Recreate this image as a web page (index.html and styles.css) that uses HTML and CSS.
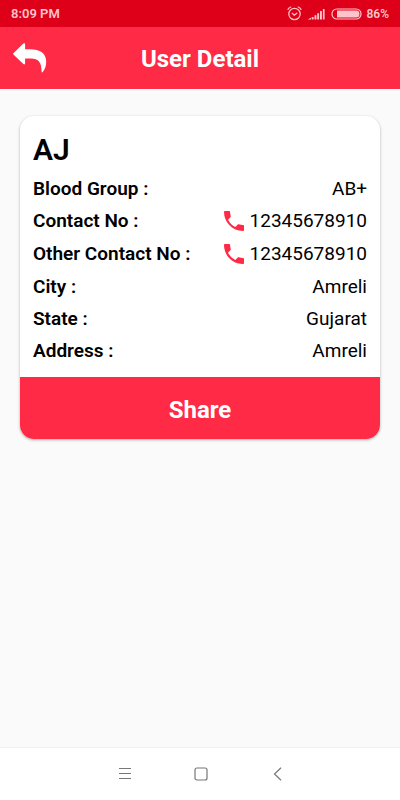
FILE: index.html
```html
<!DOCTYPE html>
<html lang="en">
<head>
    <meta charset="UTF-8">
    <meta name="viewport" content="width=device-width, initial-scale=1">
    <title>User Detail</title>
    <link rel="stylesheet" href="styles.css">
</head>
<body>

<div class="status-bar">
    <span>8:09 PM</span>
    <div class="status-icons">
        <svg class="alarm" width="15" height="15" viewBox="0 0 15 15" fill="none" stroke="currentColor" stroke-width="1.2" stroke-linecap="round">
            <circle cx="7.5" cy="8" r="5.7"/>
            <path d="M1 3.4Q2 1.7 3.8 1M14 3.4Q13 1.7 11.2 1M5.2 7.3L7.3 9.3L9.8 7.2"/>
        </svg>
        <svg class="signal" width="17" height="13" viewBox="0 0 17 13" fill="currentColor">
            <path d="M0 12.3L3 10.8V12.5H0zM3.7 10H5.6V12.5H3.7zM6.5 8.2H8.4V12.5H6.5zM9.2 6.2H11.1V12.5H9.2zM12 4H13.9V12.5H12zM14.9 2H16.6V12.5H14.9z"/>
        </svg>
        <svg class="battery" width="31" height="12" viewBox="0 0 31 12">
            <rect x="1" y="1" width="29" height="10" rx="4.8" fill="none" stroke="currentColor" stroke-width="1.2"/>
            <path d="M6 2.5H26Q28.5 3 28.5 6T26 9.5H6z" fill="currentColor"/>
        </svg>
        <span>86%</span>
    </div>
</div>

<header class="app-bar">
    <button class="back" type="button" aria-label="Back">
        <svg width="34" height="30" viewBox="0 0 34 30" fill="#fff">
            <path d="M0.4 10.2L10.4 0.5Q12 -0.5 12.1 1.3V6.3H17C27 6.3 33.2 10.5 33.2 18.5C33.2 22.5 32.2 26 29.6 29.2H28.6C28.6 19 25.5 15.5 18 15.5H12.1V20.3Q12 22 10.4 21.1L0.4 11.5Q-0.2 10.8 0.4 10.2z"/>
        </svg>
    </button>
    <h1>User Detail</h1>
</header>

<main class="content">
    <section class="card">
        <div class="card-body">
            <h2>AJ</h2>
            <dl class="details">
                <div class="row">
                    <dt>Blood Group :</dt>
                    <dd>AB+</dd>
                </div>
                <div class="row phone-row">
                    <dt>Contact No :</dt>
                    <dd>
                        <a class="phone" href="tel:12345678910">
                            <svg width="20" height="20" viewBox="3 3 18 18" fill="#ff2a45" aria-hidden="true">
                                <path d="M6.62 10.79c1.44 2.83 3.76 5.14 6.59 6.59l2.2-2.2c.27-.27.67-.36 1.02-.24 1.12.37 2.33.57 3.57.57.55 0 1 .45 1 1V20c0 .55-.45 1-1 1-9.39 0-17-7.61-17-17 0-.55.45-1 1-1h3.5c.55 0 1 .45 1 1 0 1.25.2 2.45.57 3.57.11.35.03.74-.25 1.02l-2.2 2.2z"/>
                            </svg>
                            12345678910
                        </a>
                    </dd>
                </div>
                <div class="row phone-row">
                    <dt>Other Contact No :</dt>
                    <dd>
                        <a class="phone" href="tel:12345678910">
                            <svg width="20" height="20" viewBox="3 3 18 18" fill="#ff2a45" aria-hidden="true">
                                <path d="M6.62 10.79c1.44 2.83 3.76 5.14 6.59 6.59l2.2-2.2c.27-.27.67-.36 1.02-.24 1.12.37 2.33.57 3.57.57.55 0 1 .45 1 1V20c0 .55-.45 1-1 1-9.39 0-17-7.61-17-17 0-.55.45-1 1-1h3.5c.55 0 1 .45 1 1 0 1.25.2 2.45.57 3.57.11.35.03.74-.25 1.02l-2.2 2.2z"/>
                            </svg>
                            12345678910
                        </a>
                    </dd>
                </div>
                <div class="row">
                    <dt>City :</dt>
                    <dd>Amreli</dd>
                </div>
                <div class="row">
                    <dt>State :</dt>
                    <dd>Gujarat</dd>
                </div>
                <div class="row">
                    <dt>Address :</dt>
                    <dd>Amreli</dd>
                </div>
            </dl>
        </div>
        <button class="share" type="button">Share</button>
    </section>
</main>

<nav class="nav-bar">
    <button type="button" aria-label="Menu">
        <svg width="14" height="14" viewBox="0 0 14 14" fill="none" stroke="#777">
            <path d="M1 1.5H13M1 6.5H13M1 11.5H13"/>
        </svg>
    </button>
    <button type="button" aria-label="Home">
        <svg width="14" height="14" viewBox="0 0 14 14" fill="none" stroke="#777" stroke-width="1.2">
            <rect x="1" y="1" width="12" height="12" rx="2"/>
        </svg>
    </button>
    <button type="button" aria-label="Previous">
        <svg width="14" height="14" viewBox="0 0 14 14" fill="none" stroke="#777" stroke-width="1.2">
            <path d="M11 0.8L4.5 7L11 13.2"/>
        </svg>
    </button>
</nav>

</body>
</html>
```

FILE: styles.css
```css
*{
    margin: 0;
    padding: 0;
    box-sizing: border-box;
}

body{
    display: flex;
    flex-direction: column;
    min-height: 100vh;
    background-color: #fafafa;
    color: #000;
    font-family: Roboto, "Liberation Sans", sans-serif;
}

button{
    border: none;
    background: none;
    font-family: inherit;
    cursor: pointer;
}

svg{
    display: block;
}

.status-bar{
    display: flex;
    align-items: center;
    justify-content: space-between;
    height: 27px;
    padding: 0 11px;
    background-color: #de0018;
    color: #ffc4cb;
    font-size: 13px;
    font-weight: 600;
}

.status-icons{
    display: flex;
    align-items: center;
    gap: 6px;
    font-size: 12px;
}

.battery{
    margin-right: -2px;
}

.app-bar{
    display: grid;
    grid-template-columns: 34px 1fr 34px;
    align-items: center;
    height: 62px;
    padding: 0 13px;
    background-color: #ff2a45;
    color: #fff;
}

.app-bar h1{
    padding-top: 2px;
    text-align: center;
    font-size: 24px;
    font-weight: 700;
}

.content{
    flex: 1;
    padding: 27px 20px;
}

.card{
    overflow: hidden;
    border-radius: 14px;
    background-color: #fff;
    box-shadow: 0 1px 3px rgba(0, 0, 0, 0.3);
}

.card-body{
    padding: 16px 13px 11px 13px;
}

.card h2{
    margin-bottom: 4px;
    line-height: 36px;
    font-size: 30px;
    font-weight: 600;
}

.row{
    display: flex;
    align-items: center;
    justify-content: space-between;
    height: 32px;
    font-size: 19px;
}

.phone-row{
    height: 33px;
}

.row dt{
    font-weight: 600;
}

.phone{
    display: flex;
    align-items: center;
    gap: 6px;
    color: inherit;
    text-decoration: none;
}

.share{
    display: block;
    width: 100%;
    height: 62px;
    padding-top: 3px;
    background-color: #ff2a45;
    color: #fff;
    font-size: 24px;
    font-weight: 700;
}

.nav-bar{
    display: flex;
    justify-content: center;
    gap: 48px;
    height: 53px;
    padding-left: 2px;
    border-top: 1px solid #f0f0f0;
    background-color: #fff;
}

.nav-bar button{
    display: flex;
    align-items: center;
    justify-content: center;
    width: 28px;
}
```
